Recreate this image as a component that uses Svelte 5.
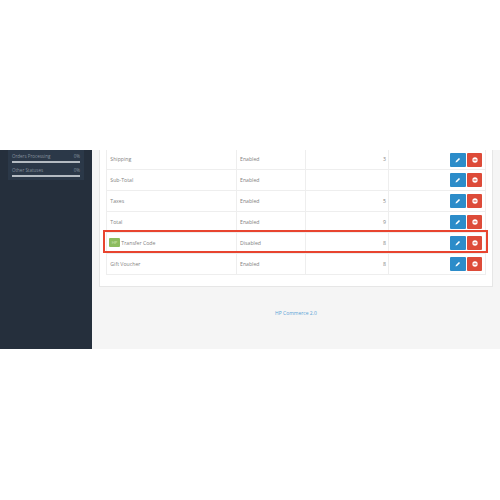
<script>
  let rows = [
    { name: "Shipping", status: "Enabled", order: "3" },
    { name: "Sub-Total", status: "Enabled", order: "" },
    { name: "Taxes", status: "Enabled", order: "5" },
    { name: "Total", status: "Enabled", order: "9" },
    { name: "Transfer Code", status: "Disabled", order: "8", hp: true },
    { name: "Gift Voucher", status: "Enabled", order: "8" }
  ];
  let stats = ["Orders Processing", "Other Statuses"];
</script>

<div class="top"></div>
<div class="app">
  <aside>
    <div class="stats">
      {#each stats as s}
        <div class="stat">
          <div class="label"><span>{s}</span><span>0%</span></div>
          <div class="bar"></div>
        </div>
      {/each}
    </div>
  </aside>
  <main>
    <div class="panel">
      <div class="table">
        {#each rows as r}
          <div class="row" class:hl={r.hp}>
            <div class="cell name">
              {#if r.hp}<span class="badge">HP</span>{/if}
              {r.name}
            </div>
            <div class="cell status">{r.status}</div>
            <div class="cell order">{r.order}</div>
            <div class="cell actions">
              <span class="btn blue">
                <svg viewBox="0 0 10 10" width="6" height="6"><path d="M1 9l.5-2.4L6.6 1.5l1.9 1.9-5.1 5.1z" fill="#fff"/></svg>
              </span>
              <span class="btn red">
                <svg viewBox="0 0 10 10" width="6" height="6"><circle cx="5" cy="5" r="4.4" fill="#fff"/><rect x="2.6" y="4.1" width="4.8" height="1.8" fill="#dd4b39"/></svg>
              </span>
            </div>
          </div>
        {/each}
      </div>
    </div>
    <footer>HP Commerce 2.0</footer>
  </main>
</div>

<style>
  :global(body) {
    margin: 0;
    background: #fff;
    font-family: "Open Sans", sans-serif;
  }
  .top {
    height: 150px;
  }
  .app {
    display: flex;
    height: 199px;
  }
  aside {
    width: 92px;
    flex: none;
    background: #252f3c;
    box-sizing: border-box;
    padding: 0 8px;
  }
  .stats {
    background: #2b3848;
    height: 30px;
    padding: 0 4px;
    box-sizing: border-box;
  }
  .stat {
    height: 14px;
    padding-top: 2px;
    box-sizing: border-box;
  }
  .label {
    display: flex;
    justify-content: space-between;
    font-size: 4.5px;
    line-height: 8px;
    margin-bottom: 1px;
    color: #87929e;
  }
  .bar {
    height: 2px;
    background: #b4bbc2;
  }
  main {
    flex: 1;
    background: #f5f5f5;
    padding: 0 7px;
    min-width: 0;
  }
  .panel {
    background: #fff;
    border: 1px solid #e6e6e6;
    border-top: none;
    height: 137px;
    box-sizing: border-box;
    padding: 0 6px;
  }
  .table {
    border: 1px solid #eeeeee;
    border-top: none;
  }
  .row {
    display: grid;
    grid-template-columns: 129px 69px 83px 1fr;
    height: 21px;
    box-sizing: border-box;
    border-bottom: 1px solid #eeeeee;
    position: relative;
  }
  .row:first-child {
    height: 20px;
  }
  .row:last-child {
    height: 20px;
    border-bottom: none;
  }
  .hl::after {
    content: "";
    position: absolute;
    left: -4px;
    right: -3px;
    top: -3px;
    bottom: 0;
    border: 2px solid #e8442f;
  }
  .cell {
    display: flex;
    align-items: center;
    font-size: 5.2px;
    color: #828282;
    padding: 0 2px 1px;
    border-left: 1px solid #eeeeee;
  }
  .cell:first-child {
    border-left: none;
  }
  .name {
    white-space: pre;
  }
  .status {
    padding-left: 3px;
  }
  .order {
    justify-content: flex-end;
  }
  .actions {
    justify-content: flex-end;
    gap: 1px;
    padding-right: 3px;
    padding-bottom: 0;
  }
  .badge {
    background: #8cbc5e;
    color: #d7eac4;
    font-size: 4.2px;
    width: 11px;
    height: 9px;
    display: flex;
    align-items: center;
    justify-content: center;
    border-radius: 1px;
  }
  .btn {
    width: 15px;
    height: 14px;
    border-radius: 1px;
    display: flex;
    align-items: center;
    justify-content: center;
  }
  .blue {
    background: #2c8cc9;
    width: 16px;
  }
  .red {
    background: #dd4b39;
  }
  footer {
    text-align: center;
    font-size: 5px;
    color: #5aa3d6;
    margin-top: 22px;
    line-height: 8px;
  }
</style>
